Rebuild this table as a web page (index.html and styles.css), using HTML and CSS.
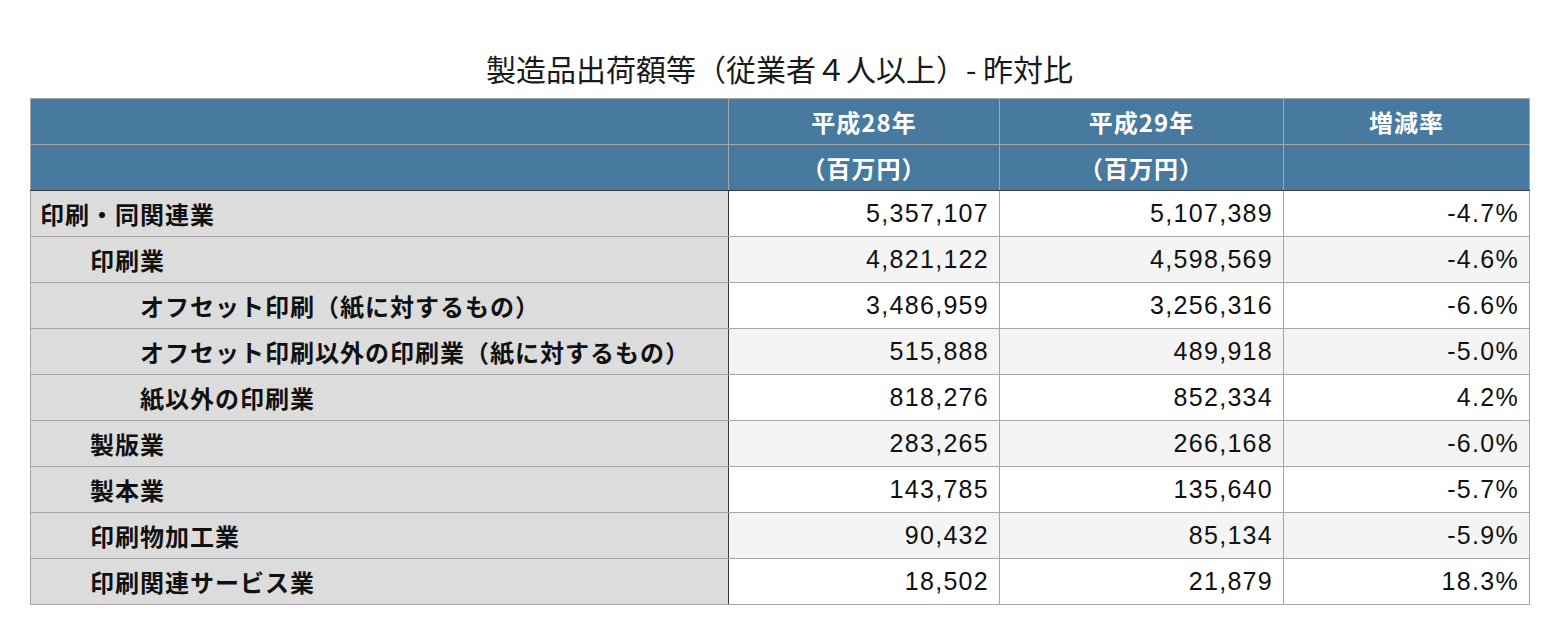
FILE: index.html
```html
<!DOCTYPE html>
<html lang="ja">
<head>
<meta charset="utf-8">
<title>製造品出荷額等 - 昨対比</title>
<link rel="stylesheet" href="styles.css">
</head>
<body>
<div class="page">
  <h1 class="title">製造品出荷額等（従業者４人以上）- 昨対比</h1>
  <table class="report">
    <colgroup>
      <col class="c-label">
      <col class="c-y28">
      <col class="c-y29">
      <col class="c-rate">
    </colgroup>
    <thead>
      <tr>
        <th class="h-label"></th>
        <th>平成28年</th>
        <th>平成29年</th>
        <th>増減率</th>
      </tr>
      <tr class="h-unit">
        <th class="h-label"></th>
        <th>（百万円）</th>
        <th>（百万円）</th>
        <th></th>
      </tr>
    </thead>
    <tbody>
      <tr><td class="label l1">印刷・同関連業</td><td class="num">5,357,107</td><td class="num">5,107,389</td><td class="num">-4.7%</td></tr>
      <tr><td class="label l2">印刷業</td><td class="num">4,821,122</td><td class="num">4,598,569</td><td class="num">-4.6%</td></tr>
      <tr><td class="label l3">オフセット印刷（紙に対するもの）</td><td class="num">3,486,959</td><td class="num">3,256,316</td><td class="num">-6.6%</td></tr>
      <tr><td class="label l3">オフセット印刷以外の印刷業（紙に対するもの）</td><td class="num">515,888</td><td class="num">489,918</td><td class="num">-5.0%</td></tr>
      <tr><td class="label l3">紙以外の印刷業</td><td class="num">818,276</td><td class="num">852,334</td><td class="num">4.2%</td></tr>
      <tr><td class="label l2">製版業</td><td class="num">283,265</td><td class="num">266,168</td><td class="num">-6.0%</td></tr>
      <tr><td class="label l2">製本業</td><td class="num">143,785</td><td class="num">135,640</td><td class="num">-5.7%</td></tr>
      <tr><td class="label l2">印刷物加工業</td><td class="num">90,432</td><td class="num">85,134</td><td class="num">-5.9%</td></tr>
      <tr><td class="label l2">印刷関連サービス業</td><td class="num">18,502</td><td class="num">21,879</td><td class="num">18.3%</td></tr>
    </tbody>
  </table>
</div>
</body>
</html>
```

FILE: styles.css
```css
html, body {
  margin: 0;
  padding: 0;
  background: #ffffff;
}

.page {
  padding: 48px 0 0 30px;
  width: 1499px;
  font-family: "Noto Sans CJK JP", "Noto Sans", sans-serif;
  color: #111111;
}

.title {
  margin: 0 0 10px;
  font-size: 30px;
  line-height: 40px;
  font-weight: 400;
  text-align: center;
  color: #1a1a1a;
}

.report {
  width: 1499px;
  border-collapse: collapse;
  table-layout: fixed;
  border: 1px solid #a6a6a6;
}

.c-label { width: 698px; }
.c-y28 { width: 271px; }
.c-y29 { width: 284px; }
.c-rate { width: 246px; }

.report th,
.report td {
  height: 46px;
  padding: 0;
  border: 1px solid #a6a6a6;
  box-sizing: border-box;
}

.report th {
  background: #477a9e;
  color: #ffffff;
  font-size: 24px;
  font-weight: 700;
  letter-spacing: 1px;
  text-align: center;
  vertical-align: middle;
  line-height: 30px;
}

.report .h-unit th {
  border-bottom: 1px solid #3a3a3a;
}

.report td.label {
  background: #dcdcdc;
  font-size: 24px;
  font-weight: 700;
  letter-spacing: 1px;
  color: #111111;
  border-right: 1px solid #3a3a3a;
  white-space: nowrap;
}

.report td.l1 { padding-left: 9px; }
.report td.l2 { padding-left: 59px; }
.report td.l3 { padding-left: 109px; }

.report td.num {
  font-family: "Liberation Sans", Arial, sans-serif;
  font-size: 25px;
  letter-spacing: 1.3px;
  text-align: right;
  padding-right: 10px;
  color: #111111;
  background: #ffffff;
}

.report tbody tr:nth-child(even) td.num {
  background: #f4f4f4;
}
```
